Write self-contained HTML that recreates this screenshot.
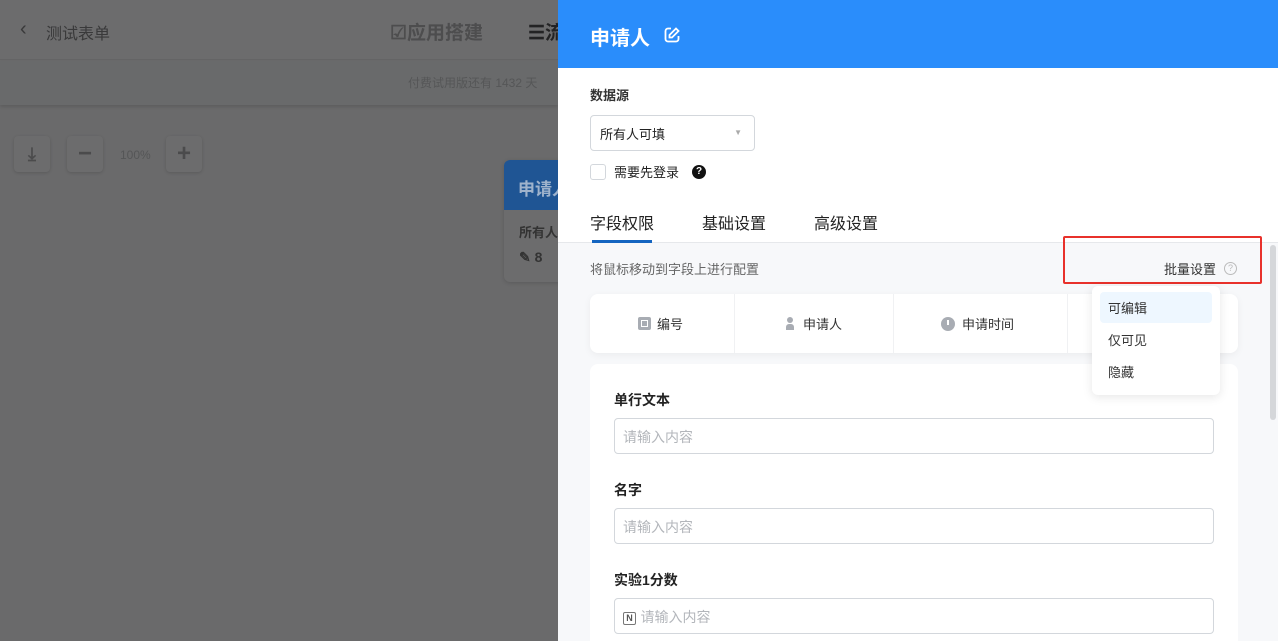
<!DOCTYPE html>
<html><head><meta charset="utf-8"><style>
*{box-sizing:border-box;margin:0;padding:0}
html,body{width:1278px;height:641px;overflow:hidden}
body{position:relative;font-family:"Liberation Sans","Noto Sans CJK SC",sans-serif;background:#6b6b6c;}
.abs{position:absolute;white-space:nowrap}
.bg{left:0;top:0;width:558px;height:641px;background:#6a6a6b}
.topbar{left:0;top:0;width:558px;height:60px;background:#6c6c6d;border-bottom:1px solid #646465}
.notice{left:0;top:61px;width:558px;height:44px;background:#696a6b;box-shadow:0 2px 3px rgba(0,0,0,.12)}
.btn{width:36px;height:36px;background:#6c6c6d;border-radius:4px;box-shadow:0 1px 3px rgba(0,0,0,.15);color:#4b4b4c;font-weight:bold;text-align:center;line-height:36px;font-size:24px}
.panel{left:558px;top:0;width:720px;height:641px;background:#f7f8fa;overflow:hidden}
.hdr{left:0;top:0;width:720px;height:68px;background:#2a8dfb}
.white{left:0;top:68px;width:720px;height:175px;background:#fff;border-bottom:1px solid #e6e8eb}
.input{border:1px solid #d3d7dc;border-radius:4px;background:#fff}
.ph{color:#b3b6bb;font-size:14px}
.lbl{font-size:14px;color:#222;font-weight:bold}
</style></head><body>
<div class="abs bg"></div>
<div class="abs topbar"></div>
<div class="abs" style="left:20px;top:18px;font-size:20px;color:#39393a">‹</div>
<div class="abs" style="left:46px;top:20px;font-size:16px;color:#39393a">测试表单</div>
<div class="abs" style="left:390px;top:18px;font-size:19px;color:#4d4d4e;font-weight:bold">☑应用搭建</div>
<div class="abs" style="left:528px;top:18px;font-size:19px;color:#232324;font-weight:bold">☰流</div>
<div class="abs notice"></div>
<div class="abs" style="left:408px;top:74px;font-size:12px;color:#555657">付费试用版还有 1432 天</div>
<div class="abs btn" style="left:14px;top:136px;font-size:18px">⤓</div>
<div class="abs btn" style="left:67px;top:136px">−</div>
<div class="abs" style="left:120px;top:148px;font-size:12px;color:#555657">100%</div>
<div class="abs btn" style="left:166px;top:136px">+</div>
<div class="abs" style="left:504px;top:160px;width:60px;height:122px;background:#6c6c6d;border-radius:6px;overflow:hidden;box-shadow:0 1px 4px rgba(0,0,0,.15)">
<div style="height:50px;background:#1f5594;color:#9fb3cc;font-size:17px;font-weight:bold;padding:15px 0 0 14px;white-space:nowrap">申请人</div>
<div style="padding:12px 0 0 15px;font-size:13px;color:#333;font-weight:bold;white-space:nowrap">所有人</div>
<div style="padding:8px 0 0 15px;font-size:14px;color:#333;font-weight:bold;white-space:nowrap">✎ 8</div>
</div>

<div class="abs panel">
<div class="abs hdr"></div>
<div class="abs" style="left:32px;top:22px;color:#fff;font-size:20px;font-weight:bold">申请人</div>
<svg class="abs" style="left:105px;top:26px" width="18" height="18" viewBox="0 0 18 18" fill="none" stroke="#fff" stroke-width="1.8"><path d="M8 2.5H5a2.5 2.5 0 0 0-2.5 2.5v8A2.5 2.5 0 0 0 5 15.5h8a2.5 2.5 0 0 0 2.5-2.5v-3"/><path d="M13 2.5l2.5 2.5-6.5 6.5H6.5V9z"/></svg>
<div class="abs white"></div>
<div class="abs" style="left:32px;top:85px;font-size:13px;color:#333;font-weight:bold">数据源</div>
<div class="abs input" style="left:32px;top:115px;width:165px;height:36px;padding:8px 9px;font-size:13px;color:#222">所有人可填<span style="position:absolute;right:12px;top:12px;color:#aaa;font-size:8px">▼</span></div>
<div class="abs" style="left:32px;top:164px;width:16px;height:16px;border:1px solid #d3d7dc;border-radius:3px"></div>
<div class="abs" style="left:56px;top:162px;font-size:13px;color:#222">需要先登录</div>
<div class="abs" style="left:134px;top:165px;width:14px;height:14px;border-radius:50%;background:#111;color:#fff;font-size:10px;font-weight:bold;text-align:center;line-height:14px">?</div>
<div class="abs" style="left:32px;top:210px;font-size:16px;color:#222">字段权限</div>
<div class="abs" style="left:34px;top:240px;width:60px;height:3px;background:#1565c0"></div>
<div class="abs" style="left:144px;top:210px;font-size:16px;color:#222">基础设置</div>
<div class="abs" style="left:256px;top:210px;font-size:16px;color:#222">高级设置</div>
<div class="abs" style="left:32px;top:259px;font-size:13px;color:#666">将鼠标移动到字段上进行配置</div>
<div class="abs" style="left:606px;top:259px;font-size:13px;color:#333">批量设置</div>
<div class="abs" style="left:666px;top:262px;width:13px;height:13px;border:1px solid #bbb;border-radius:50%;font-size:9px;color:#bbb;text-align:center;line-height:11px">?</div>
<div class="abs" style="left:505px;top:236px;width:199px;height:48px;border:2px solid #e8312b;border-radius:2px"></div>
<div class="abs" style="left:32px;top:294px;width:648px;height:59px;background:#fff;border-radius:8px;box-shadow:0 2px 8px rgba(0,0,0,.05)">
<div class="abs" style="left:144px;top:0;width:1px;height:59px;background:#f0f1f3"></div>
<div class="abs" style="left:303px;top:0;width:1px;height:59px;background:#f0f1f3"></div>
<div class="abs" style="left:477px;top:0;width:1px;height:59px;background:#f0f1f3"></div>
<div class="abs" style="left:48px;top:23px;width:13px;height:13px;background:#a8acb3;border-radius:2px"><div style="margin:3px;width:7px;height:7px;border:1px solid #fff"></div></div>
<div class="abs" style="left:67px;top:20px;font-size:13px;color:#333">编号</div>
<div class="abs" style="left:196px;top:23px;width:8px;height:13px"><div style="width:6px;height:6px;border-radius:50%;background:#a8acb3;margin-left:1px"></div><div style="width:8px;height:6px;border-radius:3px 3px 0 0;background:#a8acb3;margin-top:1px"></div></div>
<div class="abs" style="left:213px;top:20px;font-size:13px;color:#333">申请人</div>
<div class="abs" style="left:351px;top:23px;width:14px;height:14px;border-radius:50%;background:#a8acb3"><div style="position:absolute;left:6px;top:3px;width:2px;height:5px;background:#fff"></div></div>
<div class="abs" style="left:372px;top:20px;font-size:13px;color:#333">申请时间</div>
</div>
<div class="abs" style="left:32px;top:364px;width:648px;height:290px;background:#fff;border-radius:8px">
<div class="abs lbl" style="left:24px;top:26px">单行文本</div>
<div class="abs input" style="left:24px;top:54px;width:600px;height:36px;padding:8px 8px"><span class="ph">请输入内容</span></div>
<div class="abs lbl" style="left:24px;top:116px">名字</div>
<div class="abs input" style="left:24px;top:144px;width:600px;height:36px;padding:8px 8px"><span class="ph">请输入内容</span></div>
<div class="abs lbl" style="left:24px;top:206px">实验1分数</div>
<div class="abs input" style="left:24px;top:234px;width:600px;height:36px;padding:8px 8px"><span style="display:inline-block;width:13px;height:13px;border:1.5px solid #777;border-radius:2px;font-size:9px;line-height:10px;text-align:center;color:#555;font-weight:bold;vertical-align:1px">N</span> <span class="ph">请输入内容</span></div>
</div>
<div class="abs" style="left:534px;top:286px;width:128px;height:109px;background:#fff;border-radius:6px;box-shadow:0 2px 10px rgba(0,0,0,.1)">
<div class="abs" style="left:8px;top:6px;width:112px;height:31px;background:#eef7ff;border-radius:4px"></div>
<div class="abs" style="left:16px;top:12px;font-size:13px;color:#333">可编辑</div>
<div class="abs" style="left:16px;top:44px;font-size:13px;color:#333">仅可见</div>
<div class="abs" style="left:16px;top:76px;font-size:13px;color:#333">隐藏</div>
</div>
<div class="abs" style="left:712px;top:245px;width:6px;height:175px;background:#d5d7da;border-radius:3px"></div>
</div>
</body></html>
